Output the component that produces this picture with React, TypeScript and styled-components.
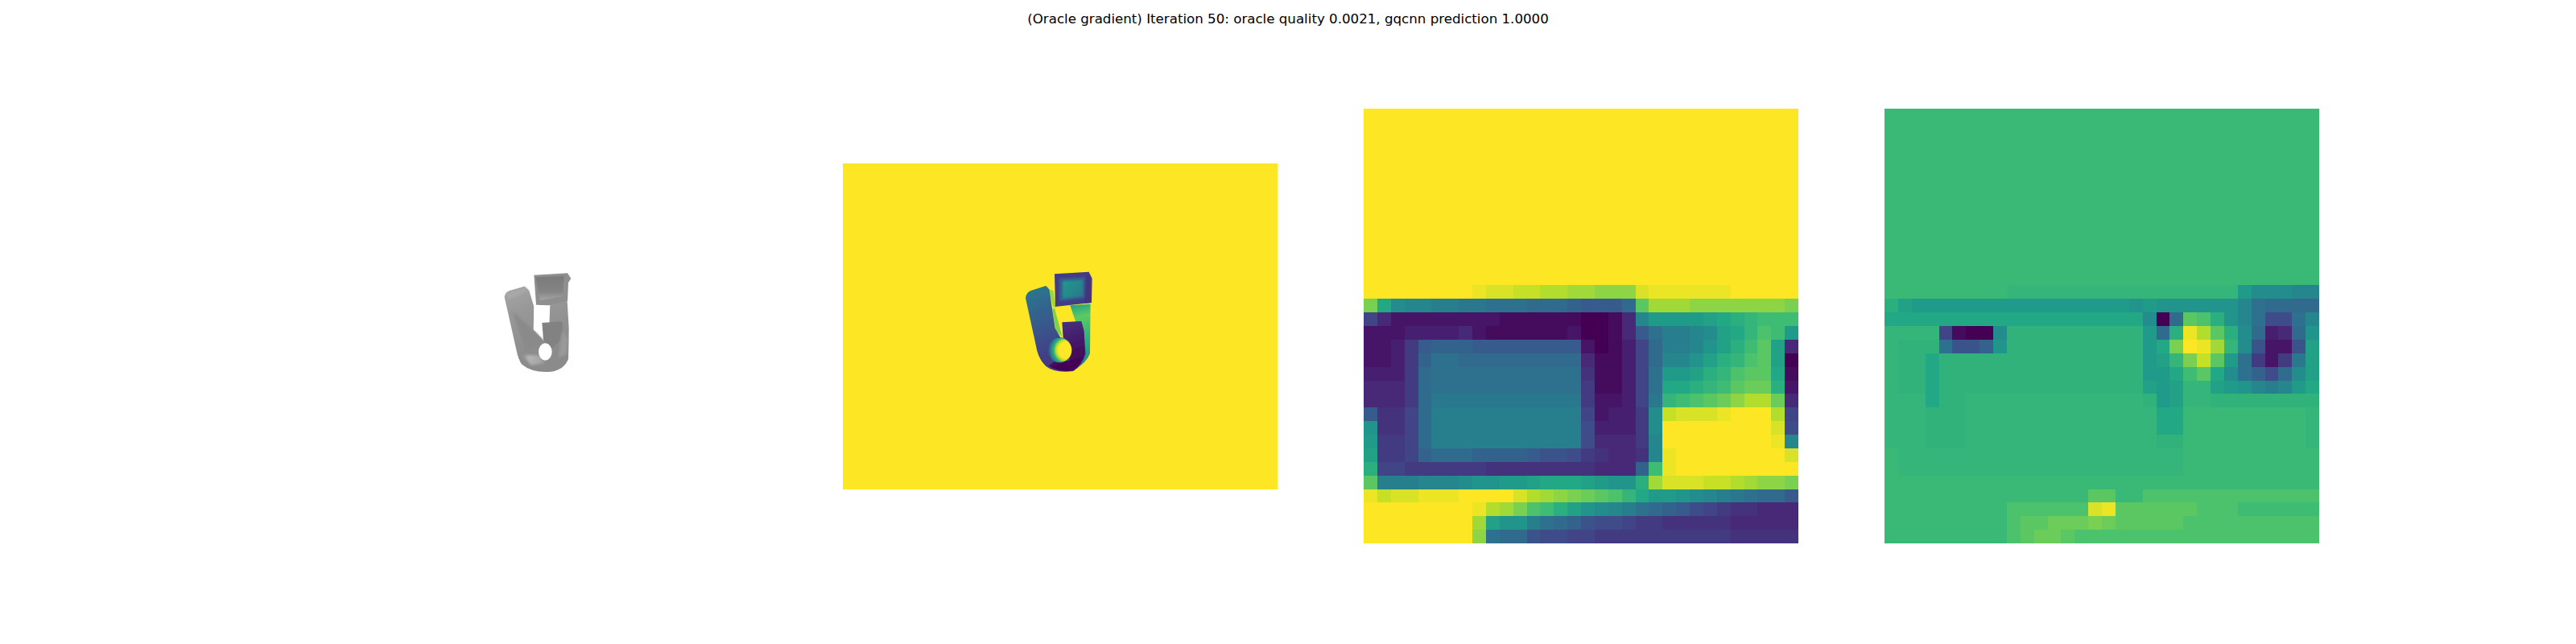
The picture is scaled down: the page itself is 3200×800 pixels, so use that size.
import styled, { createGlobalStyle } from "styled-components";

const GlobalStyle = createGlobalStyle`
  html, body {
    margin: 0;
    padding: 0;
    background: #fff;
  }
`;

const Figure = styled.div`
  width: 3200px;
  height: 800px;
  overflow: hidden;
  background: #fff;
`;

const Title = styled.div`
  height: 48px;
  line-height: 48px;
  text-align: center;
  font-family: "DejaVu Sans", sans-serif;
  font-size: 16.67px;
  color: #000;
`;

const Row = styled.div`
  display: flex;
  align-items: center;
  gap: 107px;
  height: 540px;
  margin-top: 87px;
  padding-left: 400px;
`;

const ImageAxis = styled.svg`
  display: block;
  flex: none;
  width: 540px;
  height: 405px;
`;

const HeatAxis = styled.svg`
  display: block;
  flex: none;
  width: 540px;
  height: 540px;
  shape-rendering: crispEdges;
`;

const stops = [
  [68, 1, 84],
  [72, 36, 117],
  [65, 68, 135],
  [53, 95, 141],
  [42, 120, 142],
  [33, 145, 140],
  [34, 168, 132],
  [68, 191, 112],
  [122, 209, 81],
  [189, 223, 38],
  [253, 231, 37],
];

const digits = "0123456789abcdefghijklmnopqrstuvwxyz";

// one character per cell: 0 = bottom of viridis, z = top, upper case = half a step up
function viridis(ch: string) {
  const lower = ch.toLowerCase();
  const half = lower !== ch ? 0.5 : 0;
  const v = ((digits.indexOf(lower) + half) / 35) * 10;
  const i = Math.min(Math.floor(v), 9);
  const t = v - i;
  const c = stops[i].map((a, k) => Math.round(a + (stops[i + 1][k] - a) * t));
  return `rgb(${c[0]},${c[1]},${c[2]})`;
}

const r = (c: string, n: number) => c.repeat(n);

const depthRows: string[] = [
  ...Array(13).fill(r("z", 32)),
  "zzzzzzzzyxxwwvvuutttxyyyyyyzzzzz",
  "slhggffeedddcccbaaacquuuttttttts",
  "74222222221111110014gjjjjklmnooo",
  "22233334211111120014adffghklnpoj",
  "2236abbbaaaaaaaa20137cffgikmoqk4",
  "2236bddccccccccc41137cggikmnpqk0",
  "3336c" + r("d", 11) + "51137djjkmnpqql1",
  "4446c" + r("d", 11) + "61137dllmnoqrrm2",
  "4446c" + r("e", 11) + "62237enopqrtvvr4",
  "a557c" + r("f", 11) + "72336hwxxxyzzzv7",
  "i557c" + r("f", 11) + "83336h" + r("z", 8) + "x8",
  "j667c" + r("f", 11) + "84446g" + r("z", 8) + "yg",
  "k667bcccbbbba998" + "65445gy" + r("z", 8) + "x",
  "m776666665555555" + "5444boy" + r("z", 9),
  "qfffggghiijjklllkjiimuxxxwwvutts",
  "ywxxyyyzzzzxvutsrqpnljjihgfedcca",
  r("z", 8) + "yvuspomkihgfdcba87655444",
  r("z", 8) + "ukiifdcb988766" + r("5", 5) + r("4", 5),
  r("z", 8) + "tdcc98877" + r("6", 10) + r("5", 5),
];

const gradRows: string[] = [
  ...Array(13).fill(r("N", 32)),
  r("N", 9) + r("n", 17) + "jhhhgg",
  "mk" + r("j", 16) + "ij" + r("i", 6) + "gdcccc",
  r("l", 19) + "h0cqpmigd88dg",
  "nnnn7100h" + r("M", 10) + "jcmyvqmhc34ci",
  "nMMMd99bi" + r("M", 10) + "jlszyunh9229k",
  "nMMl" + r("M", 15) + "jknswqjd626ek",
  "nMMl" + r("M", 15) + "jjloqlhdb8chk",
  "nMMl" + r("M", 15) + "kjknnkjigfgjl",
  "nnnlMM" + r("n", 13) + "Mjknn" + r("M", 8),
  "nnnMMM" + r("n", 13) + "nll" + r("N", 9) + "n",
  "nnnMMM" + r("n", 13) + "nll" + r("N", 9) + "n",
  "nnnMMM" + r("n", 13) + "nMM" + r("N", 9) + "n",
  "Nnn" + r("n", 19) + r("N", 10),
  "Nnn" + r("n", 19) + r("N", 10),
  r("N", 32),
  r("N", 15) + "qqNNp" + r("p", 12),
  r("N", 9) + r("p", 6) + "xy" + r("q", 6) + "ppp" + r("o", 6),
  r("N", 9) + "pqqrrrsr" + r("q", 5) + r("p", 10),
  r("N", 9) + "pqrrqpp" + r("p", 16),
];

function Heatmap({ rows }: { rows: string[] }) {
  return (
    <HeatAxis viewBox="0 0 32 32">
      {rows.map((row, y) =>
        row
          .split("")
          .map((ch, x) => (
            <rect key={x + "-" + y} x={x} y={y} width={1.01} height={1.01} fill={viridis(ch)} />
          ))
      )}
    </HeatAxis>
  );
}

// grey render of the part, coordinates are 3x the pixel grid
function GreyPart() {
  return (
    <svg viewBox="0 0 480 480" x={180} y={108} width={160} height={160}>
      <defs>
        <linearGradient id="armGrey" gradientUnits="userSpaceOnUse" x1="140" y1="150" x2="260" y2="400">
          <stop offset="0" stopColor="#a4a4a4" />
          <stop offset="0.35" stopColor="#989898" />
          <stop offset="1" stopColor="#8b8b8b" />
        </linearGradient>
        <linearGradient id="cupGrey" gradientUnits="userSpaceOnUse" x1="0" y1="100" x2="0" y2="190">
          <stop offset="0" stopColor="#7b7b7b" />
          <stop offset="0.6" stopColor="#848484" />
          <stop offset="1" stopColor="#aaaaaa" />
        </linearGradient>
        <linearGradient id="lipGrey" gradientUnits="userSpaceOnUse" x1="205" y1="385" x2="285" y2="425">
          <stop offset="0" stopColor="#8e8e8e" />
          <stop offset="0.35" stopColor="#b4b4b4" />
          <stop offset="1" stopColor="#a0a0a0" />
        </linearGradient>
        <filter id="soft1">
          <feGaussianBlur stdDeviation="2" />
        </filter>
        <filter id="soft2">
          <feGaussianBlur stdDeviation="4" />
        </filter>
      </defs>
      <g filter="url(#soft1)">
        <path
          d="M140 174 Q142 156 160 150 L215 134 L232 150 L250 210 L248 296 L285 335 L305 340 L310 200 L374 190 L380 290 L378 405 Q362 445 315 452 Q245 458 205 425 Q192 410 184 370 Z"
          fill="url(#armGrey)"
        />
        <path d="M250 92 L375 85 L388 105 L378 120 L375 190 L305 205 L258 203 Z" fill="#8f8f8f" />
        <path d="M256 100 L362 95 L358 172 L272 186 Z" fill="url(#cupGrey)" />
        <path d="M250 300 L285 335 L270 358 L205 388 L215 360 L168 225 Z" fill="#8a8a8a" filter="url(#soft2)" />
        <path d="M280 270 L355 265 L358 285 L345 340 L308 372 L285 332 Z" fill="#828282" />
        <path d="M358 300 L376 330 L372 385 L340 400 Z" fill="#9a9a9a" filter="url(#soft2)" />
        <path d="M205 388 L268 392 L290 420 L240 428 Z" fill="url(#lipGrey)" filter="url(#soft2)" />
        <path d="M148 160 L218 138 L228 150 L180 172 L150 185 Z" fill="#a8a8a8" filter="url(#soft2)" />
        <path d="M250 210 L305 220 L305 265 L278 268 L272 298 L250 298 Z" fill="#fff" />
        <ellipse cx="292" cy="378" rx="25" ry="32" fill="#fff" />
      </g>
    </svg>
  );
}

// same part in the depth image
function DepthPart() {
  return (
    <svg viewBox="0 0 480 480" x={183} y={108} width={160} height={160}>
      <defs>
        <linearGradient id="armDepth" gradientUnits="userSpaceOnUse" x1="150" y1="160" x2="240" y2="400">
          <stop offset="0" stopColor="#2c738e" />
          <stop offset="0.5" stopColor="#38588c" />
          <stop offset="1" stopColor="#443b84" />
        </linearGradient>
        <linearGradient id="rimDepth" gradientUnits="userSpaceOnUse" x1="280" y1="270" x2="330" y2="420">
          <stop offset="0" stopColor="#46307e" />
          <stop offset="1" stopColor="#440154" />
        </linearGradient>
        <linearGradient id="haloDepth" gradientUnits="userSpaceOnUse" x1="300" y1="210" x2="360" y2="430">
          <stop offset="0" stopColor="#22a884" />
          <stop offset="0.2" stopColor="#5ec962" />
          <stop offset="0.55" stopColor="#2fb47c" />
          <stop offset="1" stopColor="#26828e" />
        </linearGradient>
        <linearGradient id="boxDepth" gradientUnits="userSpaceOnUse" x1="270" y1="115" x2="345" y2="175">
          <stop offset="0" stopColor="#1f9a8a" />
          <stop offset="1" stopColor="#2a788e" />
        </linearGradient>
        <radialGradient id="holeDepth" gradientUnits="userSpaceOnUse" cx="285" cy="372" r="72">
          <stop offset="0.42" stopColor="#fde725" />
          <stop offset="0.55" stopColor="#b5de2b" />
          <stop offset="0.68" stopColor="#2ab07f" />
          <stop offset="0.85" stopColor="#2a788e" />
          <stop offset="1" stopColor="#3d4e8a" stopOpacity="0" />
        </radialGradient>
        <filter id="soft3">
          <feGaussianBlur stdDeviation="3" />
        </filter>
        <filter id="soft4">
          <feGaussianBlur stdDeviation="1.2" />
        </filter>
      </defs>
      <path d="M298 205 L374 200 L372 385 Q358 420 318 442 L340 330 Z" fill="url(#haloDepth)" filter="url(#soft4)" />
      <path d="M215 145 L235 150 L245 212 L236 212 Z" fill="#9ad93c" filter="url(#soft4)" />
      <path d="M232 220 L245 300 L268 322 L262 296 L240 215 Z" fill="#7ad151" filter="url(#soft4)" />
      <path
        d="M132 178 Q134 157 152 150 L208 132 L220 145 L242 290 L262 325 L300 330 L350 320 L356 385 Q345 430 310 450 Q240 458 208 432 Q185 410 175 375 Z"
        fill="url(#armDepth)"
        filter="url(#soft4)"
      />
      <path
        d="M268 268 L340 264 L350 300 L354 385 Q342 425 310 448 Q255 456 218 430 L240 415 L295 412 L302 370 L295 340 L272 325 Z"
        fill="url(#rimDepth)"
        filter="url(#soft4)"
      />
      <circle cx="258" cy="372" r="46" fill="url(#holeDepth)" filter="url(#soft4)" />
      <path d="M240 88 L368 80 L380 105 L378 195 L243 210 Z" fill="#433e85" filter="url(#soft4)" />
      <path d="M352 98 L370 95 L378 195 L352 198 Z" fill="#46307e" filter="url(#soft4)" />
      <path d="M258 105 L355 100 L352 178 L258 190 Z" fill="#35608d" filter="url(#soft3)" />
      <path d="M270 115 L345 110 L345 170 L270 180 Z" fill="url(#boxDepth)" filter="url(#soft3)" />
    </svg>
  );
}

export default function App() {
  return (
    <Figure>
      <GlobalStyle />
      <Title>(Oracle gradient) Iteration 50: oracle quality 0.0021, gqcnn prediction 1.0000</Title>
      <Row>
        <ImageAxis viewBox="0 0 540 405">
          <GreyPart />
        </ImageAxis>
        <ImageAxis viewBox="0 0 540 405">
          <rect width={540} height={405} fill="#fde725" />
          <DepthPart />
        </ImageAxis>
        <Heatmap rows={depthRows} />
        <Heatmap rows={gradRows} />
      </Row>
    </Figure>
  );
}
